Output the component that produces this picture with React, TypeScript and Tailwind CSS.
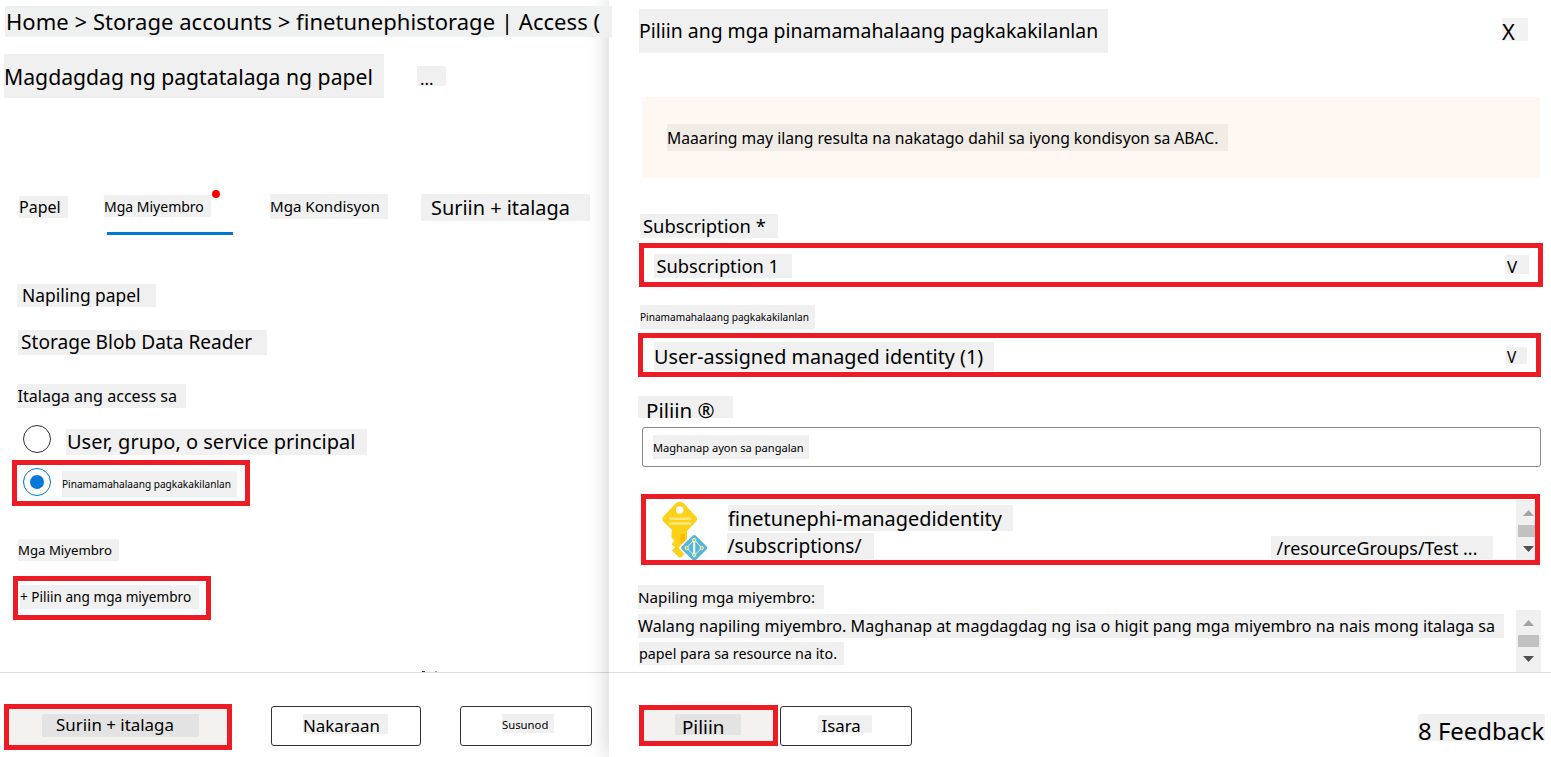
import type { ReactNode } from "react";
import { clsx } from "clsx";

/** Text on a grey backing. Size, leading and indent come from className. */
function Tag({ className, tone = "bg-[#f0f0f0]", children }: { className: string; tone?: string; children: ReactNode }) {
  return <div className={clsx("shrink-0 whitespace-nowrap text-black", tone, className)}>{children}</div>;
}

/** Red frame that marks the controls to use. */
function Highlight({ className, children }: { className: string; children?: ReactNode }) {
  return <div className={clsx("flex shrink-0 border-5 border-[#ed1c24]", className)}>{children}</div>;
}

function Radio({ checked = false }: { checked?: boolean }) {
  return (
    <span
      className={clsx(
        "flex size-7 shrink-0 items-center justify-center rounded-full border bg-white",
        checked ? "border-[#0078d7]" : "border-[#323130]",
      )}
    >
      {checked && <span className="size-3.5 rounded-full bg-[#0078d7]" />}
    </span>
  );
}

function ScrollBar({ className, thumb }: { className: string; thumb: string }) {
  return (
    <div className={clsx("flex shrink-0 flex-col bg-[#f0f0f0]", className)}>
      <svg className="ml-[7px] h-1.5 w-[11px] shrink-0" viewBox="0 0 11 6">
        <path d="M0 6 5.5 0 11 6z" fill="#a3a3a3" />
      </svg>
      <div className={clsx("mt-[9px] ml-0.5 h-3 shrink-0 bg-[#c1c1c1]", thumb)} />
      <svg className="mt-[9px] ml-[7px] h-1.5 w-[11px] shrink-0" viewBox="0 0 11 6">
        <path d="M0 0 5.5 6 11 0z" fill="#505050" />
      </svg>
    </div>
  );
}

function IdentityIcon() {
  return (
    <svg className="mt-[2px] ml-4 h-[59px] w-[48px] shrink-0" viewBox="0 0 48 59">
      <path
        d="M10 29 1.400 20.400Q-.8 18 1.400 15.600L13.500 2.600Q17.700-1 22 2.600L34 15.600Q36.200 18 34 20.400L25 30V50L19.500 56Q18 57.500 16.500 56L10 49.500 13 46.500 9.500 43 12.500 40 9.500 36.500V33z"
        fill="#fcd116"
      />
      <path d="M18.700 33H23v12L18.700 49z" fill="#ffb900" />
      <circle cx="17.700" cy="9" r="3.800" fill="#fff" />
      <path d="M8 17.800h20.500M8 22.500h20.500" stroke="#fde67f" strokeWidth="2.400" strokeLinecap="round" />
      <path d="M30.300 32.500Q32 31 33.700 32.500L47 46 36 59H28.500L18 48.500Q16.200 47 18 45z" fill="#fff" />
      <path d="M30.700 34.600Q32.200 33.300 33.700 34.600L44.700 45.600Q45.900 47 44.700 48.300L34 59H30.500L19.700 48.300Q18.500 47 19.700 45.600z" fill="#59b4d9" />
      <path d="M32.200 38.500 39.700 47 32.200 54.500 24.700 47z" fill="none" stroke="#e3f3fa" strokeWidth="1" />
      <path d="M32.200 38.500V54.500" stroke="#fff" strokeWidth="2" />
      <g fill="#a8d432" stroke="#fff" strokeWidth=".8">
        <circle cx="32.200" cy="39" r="1.700" />
        <circle cx="39.700" cy="47" r="1.700" />
        <circle cx="24.700" cy="47" r="1.700" />
        <circle cx="32.200" cy="54" r="1.700" />
      </g>
    </svg>
  );
}

function RoleAssignment() {
  return (
    <main className="flex h-full w-[609px] shrink-0 flex-col">
      <Tag tone="bg-[#eff1f0]" className="relative z-10 mt-1.5 ml-[5px] h-[31px] w-[607px] indent-px text-[22px] leading-[31px] tracking-[0.04px]">
        Home &gt; Storage accounts &gt; finetunephistorage | Access (
      </Tag>
      <div className="mt-[17px] ml-1 flex">
        <Tag className="h-11 w-[380px] text-[21.2px] leading-[45px]">Magdagdag ng pagtatalaga ng papel</Tag>
        <Tag className="mt-3 ml-[33px] h-5 w-[29px] pl-[3px] text-[17px] leading-[26px]">...</Tag>
      </div>

      <nav className="mt-[95px] flex h-[42px] items-start">
        <Tag className="mt-[3px] ml-[19px] h-[22px] w-[49px] text-[16px] leading-[22px]">Papel</Tag>
        <div className="relative mt-0.5 ml-9 h-10 w-[129px]">
          <Tag className="h-[22px] w-[107px] text-[14px] leading-[23px]">Mga Miyembro</Tag>
          <span className="absolute -top-[5px] left-[108px] size-2 rounded-full bg-[#ff0000]" />
          <span className="mt-[15px] ml-[3px] block h-[3px] w-[126px] bg-[#0078d4]" />
        </div>
        <Tag className="mt-px ml-[37px] h-[25px] w-[118px] text-[15.1px] leading-[25px]">Mga Kondisyon</Tag>
        <Tag className="mt-px ml-[33px] h-[27px] w-[169px] pl-2.5 text-[19.9px] leading-[28px]">Suriin + italaga</Tag>
      </nav>

      <Tag className="mt-[49px] ml-[17px] h-[23px] w-[139px] pl-[5px] text-[17.4px] leading-[23px]">Napiling papel</Tag>
      <Tag className="mt-[23px] ml-[18px] h-[25px] w-[249px] pl-[3px] text-[19.1px] leading-[24px]">Storage Blob Data Reader</Tag>
      <Tag className="mt-[29px] ml-[17px] h-6 w-[169px] indent-[0.5px] text-[16.1px] leading-[24px]">Italaga ang access sa</Tag>

      <div className="mt-[17px] ml-[23px] flex h-[30px]">
        <Radio />
        <Tag className="mt-1 ml-[15px] h-[26px] w-[301px] indent-px text-[20px] leading-[26px]">User, grupo, o service principal</Tag>
      </div>
      <Highlight className="mt-[5px] ml-3 h-[46px] w-[238px] pt-[3px] pl-1.5">
        <Radio checked />
        <Tag className="mt-[3px] ml-[11px] h-[26px] w-[175px] text-[10.1px] leading-[26px]">Pinamamahalaang pagkakakilanlan</Tag>
      </Highlight>

      <Tag className="mt-[33px] ml-[18px] h-[22px] w-[101px] text-[13.2px] leading-[22px]">Mga Miyembro</Tag>
      <Highlight className="mt-[15px] ml-[13px] h-11 w-[198px] pt-1 pl-0.5">
        <Tag className="h-6 w-[179px] text-[13.6px] leading-[24px]">+ Piliin ang mga miyembro</Tag>
      </Highlight>

      <div className="mt-auto flex h-px gap-2.5 pl-[422px]">
        <span className="w-[3px] bg-[#333]" />
        <span className="w-0.5 bg-[#999]" />
      </div>
      <footer className="flex h-[85px] shrink-0 items-start border-t border-[#dcdcdc] pt-[31px] pl-1">
        <Highlight className="h-[46px] w-[228px] bg-[#f3f2f1] pt-[5px] pl-[33px]">
          <Tag tone="bg-[#e3e3e3]" className="h-[23px] w-[157px] pl-3.5 text-[16.9px] leading-[22px]">
            Suriin + italaga
          </Tag>
        </Highlight>
        <button className="mt-0.5 ml-[39px] flex h-10 w-[150px] rounded-[3px] border border-[#323130] bg-white pt-[7px] pl-[31px]">
          <Tag className="h-5 w-[85px] text-left text-[16.9px] leading-[23px]">Nakaraan</Tag>
        </button>
        <button className="mt-0.5 ml-[39px] flex h-10 w-[132px] rounded-[3px] border border-[#323130] bg-white pt-[7px] pl-[41px]">
          <Tag className="h-[19px] w-[52px] text-left text-[11.3px] leading-[21px]">Susunod</Tag>
        </button>
      </footer>
    </main>
  );
}

function IdentityPanel() {
  return (
    <aside className="flex h-full grow flex-col bg-white shadow-[0_0_22px_rgba(0,0,0,0.2)]">
      <header className="flex h-[53px] shrink-0 items-start pl-[30px]">
        <Tag className="mt-[9px] h-11 w-[469px] text-[19.4px] leading-[44px]">
          Piliin ang mga pinamamahalaang pagkakakilanlan
        </Tag>
        <Tag tone="bg-[#f2f2f2]" className="mt-[18px] ml-[394px] h-[23px] w-[26px] text-[22px] leading-[27px]">X</Tag>
      </header>

      <div className="mt-11 ml-[33px] h-[81px] w-[898px] shrink-0 rounded-[3px] bg-[#fff7f1] pt-[27px] pl-[25px]">
        <Tag tone="bg-[#f0ebe5]" className="h-[27px] w-[561px] text-[15.7px] leading-[28px]">
          Maaaring may ilang resulta na nakatago dahil sa iyong kondisyon sa ABAC.
        </Tag>
      </div>

      <Tag className="mt-9 ml-[31px] h-6 w-[138px] pl-[3px] text-[18.4px] leading-[23px]">Subscription *</Tag>
      <Highlight className="mt-[5px] ml-[30px] h-11 w-[904px] pt-1.5 pl-2.5">
        <Tag className="h-6 w-[138px] pl-0.5 indent-[0.5px] text-[18.3px] leading-[24px]">Subscription 1</Tag>
        <Tag className="mt-px ml-[713px] h-[19px] w-6 pl-0.5 text-[17px] leading-[23px]">V</Tag>
      </Highlight>

      <Tag className="mt-[18px] ml-[31px] h-6 w-[175px] text-[10.1px] leading-[25px]">Pinamamahalaang pagkakakilanlan</Tag>
      <Highlight className="mt-1 ml-[29px] h-11 w-[903px] pt-1 pl-[11px]">
        <Tag className="h-[29px] w-[340px] text-[19.75px] leading-[29px]">User-assigned managed identity (1)</Tag>
        <Tag className="mt-[5px] ml-[512px] h-[17px] w-[21px] pl-px text-[15.5px] leading-[20px]">V</Tag>
      </Highlight>

      <Tag className="mt-[19px] ml-[29px] h-[22px] w-[95px] pl-2 text-[20.5px] leading-[28px]">Piliin ®</Tag>
      <div className="mt-[9px] ml-[33px] h-10 w-[899px] shrink-0 rounded-[3px] border border-[#8a8886] bg-white pt-[7px] pl-2.5">
        <Tag className="h-6 w-[156px] text-[11.1px] leading-[25px]">Maghanap ayon sa pangalan</Tag>
      </div>

      <Highlight className="mt-[27px] ml-8 h-[71px] w-[899px] overflow-hidden">
        <IdentityIcon />
        <div className="mt-1.5 ml-[17px] flex w-[286px] flex-col">
          <Tag className="ml-px h-[26px] w-[285px] text-[19.9px] leading-[27px]">finetunephi-managedidentity</Tag>
          <Tag className="mt-0.5 h-[26px] w-[147px] indent-[0.5px] text-[19.1px] leading-[27px]">/subscriptions/</Tag>
        </div>
        <Tag className="mt-[37px] ml-[258px] h-[23px] w-[222px] pl-[5.5px] text-[17.9px] leading-[25px]">
          /resourceGroups/Test ...
        </Tag>
        <ScrollBar className="mt-px ml-[23px] h-[60px] w-[19px] pt-2.5" thumb="w-[17px]" />
      </Highlight>

      <div className="flex h-[107px] shrink-0 items-start pl-[29px]">
        <div className="w-[878px] pt-5">
          <Tag className="h-6 w-[186px] text-[15.2px] leading-[24px]">Napiling mga miyembro:</Tag>
          <Tag className="mt-[5px] h-6 w-[866px] text-[16.1px] leading-[24px] tracking-[0.015px]">
            Walang napiling miyembro. Maghanap at magdagdag ng isa o higit pang mga miyembro na nais mong italaga sa
          </Tag>
          <Tag className="mt-1 ml-px h-[23px] w-[205px] text-[14.3px] leading-[23px]">papel para sa resource na ito.</Tag>
        </div>
        <ScrollBar className="mt-[45px] h-[62px] w-[25px] pt-2.5" thumb="w-[21px]" />
      </div>

      <footer className="flex h-[85px] shrink-0 items-start border-t border-[#dcdcdc] pt-8 pl-[30px]">
        <Highlight className="h-[41px] w-[139px] bg-[#f3f2f1] pt-1 pl-[31px]">
          <Tag tone="bg-[#e3e3e3]" className="h-[21px] w-[66px] pl-[7px] text-[18.8px] leading-[27px]">
            Piliin
          </Tag>
        </Highlight>
        <button className="mt-px ml-0.5 flex h-10 w-[132px] rounded-[3px] border border-[#323130] bg-white pt-2 pl-[37px]">
          <Tag className="h-[18px] w-[54px] pl-[3.5px] text-left text-[16.8px] leading-[22px]">Isara</Tag>
        </button>
        <Tag className="mt-[9px] ml-[506px] h-[27px] w-[127px] text-[23.9px] leading-[33px]">8 Feedback</Tag>
      </footer>
    </aside>
  );
}

export default function App() {
  return (
    <div className="flex h-[757px] w-[1551px] overflow-hidden bg-white font-['Noto_Sans',sans-serif]">
      <RoleAssignment />
      <IdentityPanel />
    </div>
  );
}
